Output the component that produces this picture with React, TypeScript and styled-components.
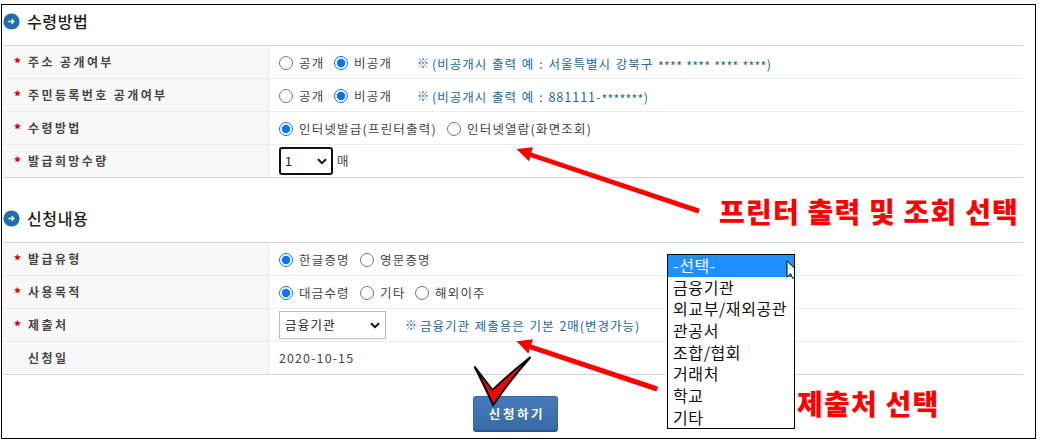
import styled, { createGlobalStyle } from "styled-components";

const options = [
  "-선택-",
  "금융기관",
  "외교부/재외공관",
  "관공서",
  "조합/협회",
  "거래처",
  "학교",
  "기타",
];

const SectionTitle = ({ children }: { children: string }) => (
  <Title>
    <svg width="17" height="17" viewBox="0 0 17 17">
      <circle cx="8.5" cy="8.5" r="8.1" fill="#1f6fae" />
      <path
        d="M5.4 8.5h5.2M8.6 6.3l2.2 2.2-2.2 2.2"
        fill="none"
        stroke="#fff"
        strokeWidth="1.3"
      />
    </svg>
    <h2>{children}</h2>
  </Title>
);

const Chevron = () => (
  <svg width="10" height="7" viewBox="0 0 10 7">
    <path d="M1 1.2l4 4 4-4" fill="none" stroke="#111" strokeWidth="2" />
  </svg>
);

type ChoiceProps = {
  name: string;
  label: string;
  width: number;
  checked?: boolean;
};

const Choice = ({ name, label, width, checked }: ChoiceProps) => (
  <ChoiceLabel $width={width}>
    <input type="radio" name={name} defaultChecked={checked} />
    <span>{label}</span>
  </ChoiceLabel>
);

const App = () => {
  return (
    <>
      <GlobalStyle />
      <Frame>
        <SectionTitle>수령방법</SectionTitle>
        <Table>
          <Row>
            <Label $required>주소 공개여부</Label>
            <Cell>
              <Choice name="address" label="공개" width={55} />
              <Choice name="address" label="비공개" width={83} checked />
              <Note $drop={5}>
                <Mark>※</Mark>
                <span>(비공개시 출력 예 : 서울특별시 강북구 </span>
                <Stars>**** **** **** ****</Stars>)
              </Note>
            </Cell>
          </Row>
          <Row>
            <Label $required>주민등록번호 공개여부</Label>
            <Cell>
              <Choice name="number" label="공개" width={55} />
              <Choice name="number" label="비공개" width={83} checked />
              <Note $drop={5}>
                <Mark>※</Mark>
                <span>(비공개시 출력 예 : 881111-</span>
                <Stars>*******</Stars>)
              </Note>
            </Cell>
          </Row>
          <Row>
            <Label $required>수령방법</Label>
            <Cell>
              <Choice
                name="method"
                label="인터넷발급(프린터출력)"
                width={168}
                checked
              />
              <Choice name="method" label="인터넷열람(화면조회)" width={150} />
            </Cell>
          </Row>
          <Row>
            <Label $required>발급희망수량</Label>
            <Cell>
              <Select $width={54} $focused>
                1<Chevron />
              </Select>
              <Unit>매</Unit>
            </Cell>
          </Row>
        </Table>
        <Gap />
        <SectionTitle>신청내용</SectionTitle>
        <Table>
          <Row>
            <Label $required>발급유형</Label>
            <Cell>
              <Choice name="type" label="한글증명" width={81} checked />
              <Choice name="type" label="영문증명" width={81} />
            </Cell>
          </Row>
          <Row>
            <Label $required>사용목적</Label>
            <Cell>
              <Choice name="purpose" label="대금수령" width={81} checked />
              <Choice name="purpose" label="기타" width={55} />
              <Choice name="purpose" label="해외이주" width={81} />
            </Cell>
          </Row>
          <Row>
            <Label $required>제출처</Label>
            <Cell>
              <Select $width={107}>
                금융기관
                <Chevron />
              </Select>
              <Note $indent={19} $drop={2}>
                <Mark>※</Mark>
                <span>금융기관 제출용은 기본 2매(변경가능)</span>
              </Note>
            </Cell>
          </Row>
          <Row>
            <Label>신청일</Label>
            <Cell>
              <DateText>2020-10-15</DateText>
            </Cell>
          </Row>
        </Table>
        <Footer>
          <Submit>신청하기</Submit>
        </Footer>
      </Frame>

      <Marks width="1040" height="443" viewBox="0 0 1040 443">
        <g fill="#f00">
          <path d="M516.5 149L533 147.3L531.2 152.4L699.8 208.8L698.2 213.6L530.2 157L529 161.3Z" />
          <path d="M516.5 341.2L533 339.3L531.2 344.4L658 386.6L656.4 391.4L529.8 349.2L528.3 353.6Z" />
        </g>
        <path
          d="M474.5 366.5Q484 379 492.5 390Q508 375 530.5 357Q511 379 493.2 405Q483.5 384 474.5 366.5Z"
          fill="#f00"
          stroke="#000"
          strokeWidth="2"
        />
      </Marks>
      <Callout $left={719} $top={191}>
        프린터 출력 및 조회 선택
      </Callout>
      <Callout $left={797} $top={383}>
        제출처 선택
      </Callout>
      <Menu>
        {options.map((option, index) => (
          <Option key={option} $active={index === 0}>
            {option}
          </Option>
        ))}
        <Cursor width="8" height="20" viewBox="0 0 8 20">
          <path
            d="M1 .8v16.4l3.6-3.4 2.2 4.6 3-1.2V9.6Z"
            fill="#fff"
            stroke="#000"
            strokeWidth="1"
          />
        </Cursor>
      </Menu>
    </>
  );
};

const GlobalStyle = createGlobalStyle`
  * {
    box-sizing: border-box;
  }
  body {
    margin: 0;
    background: #fff;
    font-family: "Noto Sans CJK KR", sans-serif;
    overflow: hidden;
  }
  #root {
    position: relative;
    height: 443px;
    padding: 4px 0 0 1px;
  }
`;

const Frame = styled.main`
  width: 1035px;
  height: 435px;
  border: 1px solid #000;
  padding-left: 1px;
`;

const Title = styled.div`
  display: flex;
  align-items: center;
  height: 40px;
  padding-bottom: 8px;
  svg {
    flex: none;
  }
  h2 {
    margin: -1px 0 0 7px;
    font-size: 16px;
    font-weight: 500;
    line-height: 24px;
    letter-spacing: 0.6px;
    color: #1c1c1c;
  }
`;

const Gap = styled.div`
  height: 24px;
`;

const Table = styled.div`
  width: 1020px;
  border-top: 1px solid #d6d6d6;
`;

const Row = styled.div`
  display: flex;
  height: 33px;
  border-bottom: 1px solid #ececec;
  &:last-child {
    border-bottom-color: #d6d6d6;
  }
`;

const Label = styled.div<{ $required?: boolean }>`
  flex: none;
  width: 266px;
  padding-left: 25px;
  border-right: 1px solid #ececec;
  background: #f8f8f8;
  color: #4a4448;
  font-size: 12px;
  font-weight: 700;
  line-height: 32px;
  letter-spacing: 2.4px;
  &::before {
    content: "${({ $required }) => ($required ? "*" : "")}";
    display: inline-block;
    width: 14px;
    margin-left: -14px;
    color: #e00000;
    font-size: 13px;
    font-weight: 900;
    line-height: 20px;
    vertical-align: -1px;
  }
`;

const Cell = styled.div`
  flex: 1;
  display: flex;
  align-items: center;
  padding-left: 10px;
  color: #444;
  font-size: 12.5px;
`;

const ChoiceLabel = styled.label<{ $width: number }>`
  display: flex;
  align-items: center;
  flex: none;
  width: ${({ $width }) => $width}px;
  padding-top: 2px;
  letter-spacing: 1.2px;
  white-space: nowrap;
  input {
    width: 14px;
    height: 14px;
    margin: 0 6px 0 0;
  }
  span {
    line-height: 20px;
    margin-top: -1px;
  }
`;

const Note = styled.div<{ $indent?: number; $drop: number }>`
  display: flex;
  margin-left: ${({ $indent = 0 }) => $indent}px;
  padding-top: ${({ $drop }) => $drop}px;
  color: #21699c;
  letter-spacing: 1px;
  word-spacing: 1px;
  line-height: 20px;
  white-space: pre;
`;

const Mark = styled.span`
  width: 15px;
  font-size: 12px;
  margin-top: -1px;
`;

const Stars = styled.span`
  letter-spacing: 0.2px;
  padding-top: 2px;
`;

const Select = styled.div<{ $width: number; $focused?: boolean }>`
  display: flex;
  align-items: center;
  justify-content: space-between;
  width: ${({ $width }) => $width}px;
  height: 28px;
  padding-bottom: 2px;
  border: ${({ $focused }) => ($focused ? "2px solid #111" : "1px solid #bbb")};
  border-radius: ${({ $focused }) => ($focused ? 3 : 0)}px;
  padding-left: ${({ $focused }) => ($focused ? 4 : 5)}px;
  padding-right: ${({ $focused }) => ($focused ? 4 : 5)}px;
  color: #222;
  font-size: 12.5px;
  letter-spacing: 1.2px;
  svg {
    margin-top: 2px;
  }
`;

const Unit = styled.span`
  margin: -1px 0 0 4px;
`;

const DateText = styled.span`
  letter-spacing: 1.1px;
  margin-top: -1px;
`;

const Footer = styled.div`
  display: flex;
  padding: 21px 0 0 470px;
`;

const Submit = styled.button`
  width: 85px;
  height: 36px;
  padding: 0 0 0 3px;
  border: 1px solid #3465a4;
  border-bottom: 2px solid #2b5791;
  border-radius: 3px;
  background: linear-gradient(#447bbb, #3a69a7);
  color: #fff;
  font-family: inherit;
  font-size: 12.5px;
  font-weight: 700;
  letter-spacing: 2.6px;
`;

const Marks = styled.svg`
  position: absolute;
  left: 0;
  top: 0;
  pointer-events: none;
`;

const Callout = styled.div<{ $left: number; $top: number }>`
  position: absolute;
  left: ${({ $left }) => $left}px;
  top: ${({ $top }) => $top}px;
  color: #f00;
  font-size: 28px;
  font-weight: 900;
  line-height: 40px;
  letter-spacing: 1.2px;
  white-space: nowrap;
`;

const Menu = styled.div`
  position: absolute;
  left: 667px;
  top: 254px;
  width: 128px;
  height: 175px;
  border: 1px solid #000;
  background: #fff;
  overflow: hidden;
`;

const Option = styled.div<{ $active: boolean }>`
  height: 21.7px;
  padding-left: 5px;
  background: ${({ $active }) => ($active ? "#1e90ff" : "#fff")};
  color: ${({ $active }) => ($active ? "#fff" : "#111")};
  font-size: 16px;
  line-height: 20px;
  letter-spacing: 0.6px;
  white-space: nowrap;
`;

const Cursor = styled.svg`
  position: absolute;
  right: 0;
  top: 5px;
`;

export default App;
